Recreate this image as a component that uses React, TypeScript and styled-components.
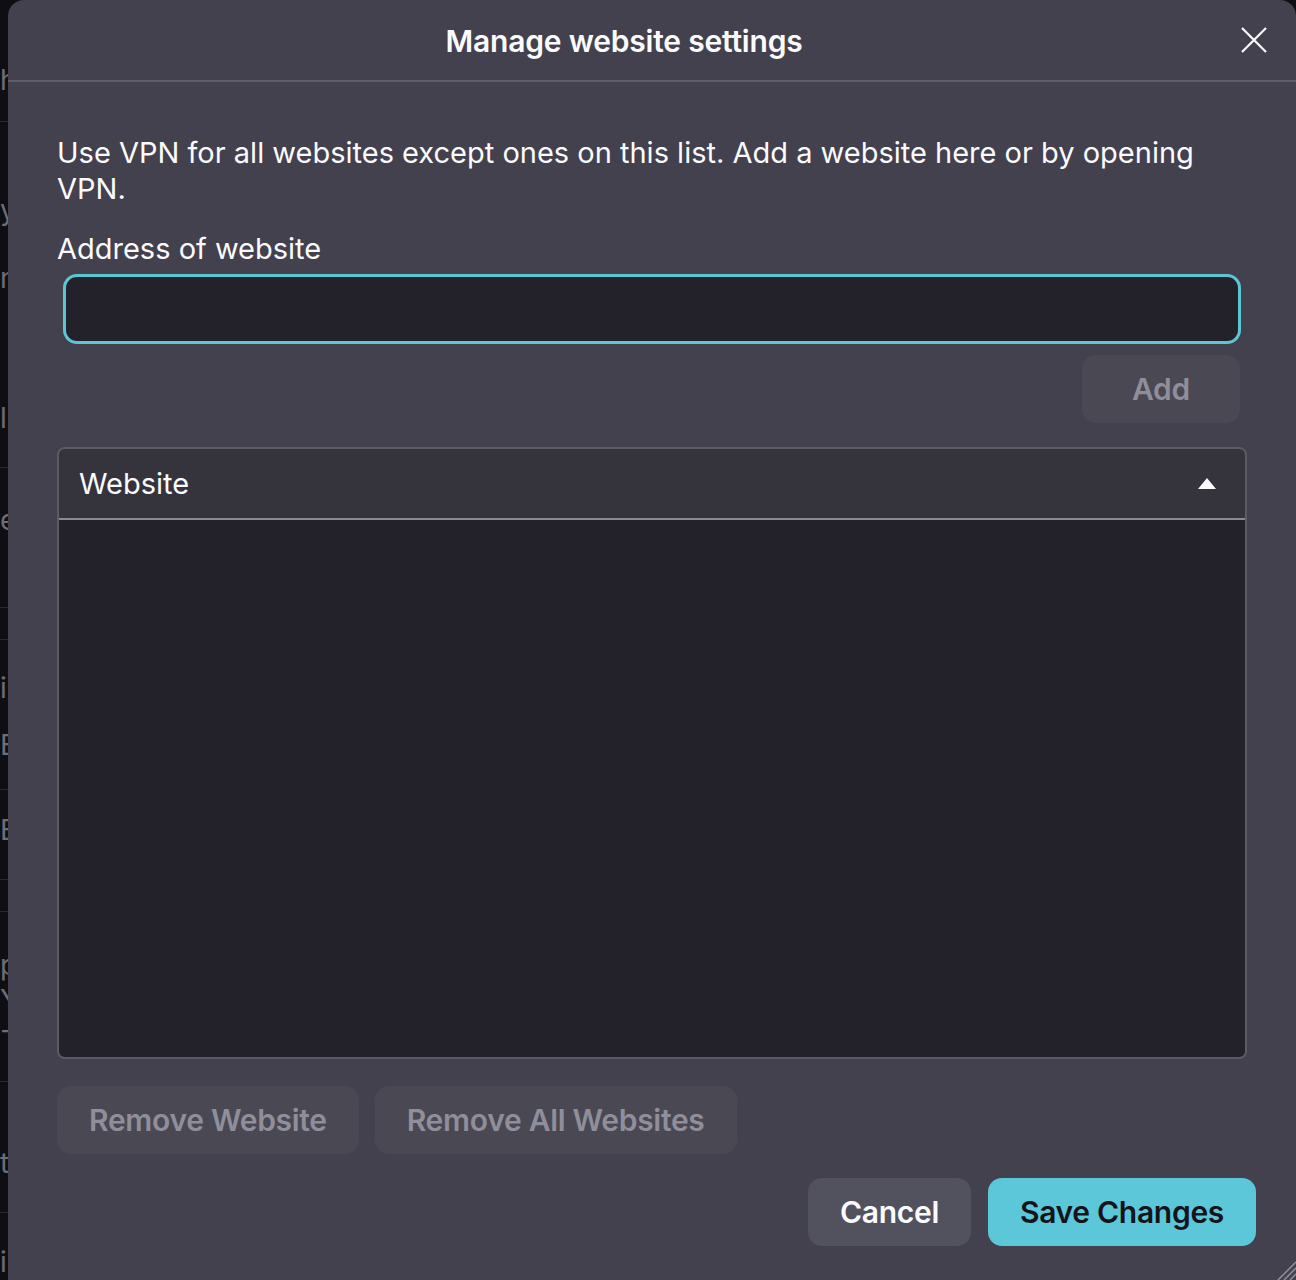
import React from 'react'
import styled, { createGlobalStyle } from 'styled-components'

const GlobalStyle = createGlobalStyle`
  html, body {
    margin: 0;
    padding: 0;
    background: #0f0f13;
  }
  body {
    font-family: Inter, "Noto Sans", "Liberation Sans", sans-serif;
    -webkit-font-smoothing: antialiased;
  }
`

const Page = styled.div`
  display: flex;
  width: 1296px;
  height: 1280px;
  overflow: hidden;
`

/* settings page peeking out behind the dialog */
const Backdrop = styled.div`
  width: 8px;
  flex-shrink: 0;
  overflow: hidden;
  display: flex;
  flex-direction: column;
  background: #0f0f13;
`

const BackdropRow = styled.div<{ $height: number; $divider?: boolean }>`
  height: ${({ $height }) => $height}px;
  flex-shrink: 0;
  box-sizing: border-box;
  border-bottom: ${({ $divider }) => ($divider ? '1px solid #2a2930' : 'none')};
  display: flex;
  flex-direction: column;
`

const BackdropGlyph = styled.div<{ $top: number }>`
  margin-top: ${({ $top }) => $top}px;
  font-size: 28px;
  line-height: 30px;
  height: 30px;
  color: #6e6d76;
  white-space: nowrap;
`

const Dialog = styled.div`
  position: relative;
  flex: 1;
  display: flex;
  flex-direction: column;
  background: #42414d;
  border-radius: 16px 16px 0 0;
  color: #fbfbfe;
`

const Header = styled.div`
  display: flex;
  align-items: center;
  height: 80px;
  padding-right: 28px;
  border-bottom: 2px solid #5e5d68;
`

const Title = styled.h1`
  flex: 1;
  margin: 0;
  padding-top: 2px;
  text-align: center;
  font-size: 30px;
  font-weight: 600;
  letter-spacing: -0.2px;
`

const CloseButton = styled.button`
  width: 28px;
  height: 28px;
  padding: 0;
  border: none;
  background: transparent;
  display: flex;
  align-items: center;
  justify-content: center;
`

const Body = styled.div`
  display: flex;
  flex-direction: column;
  padding: 53px 49px 0;
`

const Intro = styled.p`
  margin: 0;
  font-size: 29px;
  line-height: 36px;
`

const FieldLabel = styled.label`
  margin-top: 24px;
  font-size: 29px;
  line-height: 36px;
`

const AddressInput = styled.input`
  margin: 7px 6px 0;
  height: 70px;
  box-sizing: border-box;
  background: #23222b;
  border: 3px solid #5bc6d6;
  border-radius: 14px;
  color: #fbfbfe;
  font-size: 29px;
  padding: 0 18px;
  outline: none;
`

const Button = styled.button<{ $variant?: 'ghost' | 'neutral' | 'primary' }>`
  height: 68px;
  padding: 0 32px;
  border: none;
  border-radius: 14px;
  font-family: inherit;
  font-size: 30px;
  font-weight: 600;
  letter-spacing: -0.3px;
  white-space: nowrap;
  background: ${({ $variant }) =>
    $variant === 'primary' ? '#5cc7d8' : $variant === 'neutral' ? '#52515e' : '#494853'};
  color: ${({ $variant }) =>
    $variant === 'primary' ? '#15141a' : $variant === 'neutral' ? '#fbfbfe' : '#8f8e9a'};
`

const AddButton = styled(Button)`
  align-self: flex-end;
  width: 158px;
  margin: 11px 7px 0 0;
  padding: 0;
`

const Table = styled.div`
  margin-top: 24px;
  height: 612px;
  box-sizing: border-box;
  display: flex;
  flex-direction: column;
  border: 2px solid #5b5a65;
  border-radius: 8px;
  overflow: hidden;
`

const TableHead = styled.div`
  display: flex;
  align-items: center;
  justify-content: space-between;
  height: 69px;
  flex-shrink: 0;
  padding: 0 29px 0 20px;
  background: #35343d;
  border-bottom: 2px solid #8a8994;
  font-size: 29px;
`

const TableBody = styled.div`
  flex: 1;
  background: #23222b;
`

const ButtonRow = styled.div`
  display: flex;
  gap: 16px;
  margin-top: 27px;
`

const Footer = styled.div`
  display: flex;
  justify-content: flex-end;
  gap: 17px;
  margin: 24px -9px 0 0;
`

const ResizeGrip = styled.svg`
  position: absolute;
  right: 0;
  bottom: 0;
`

const backdropRows = [
  { height: 122, glyphs: [{ top: 65, text: 'h' }] },
  { height: 346, glyphs: [{ top: 73, text: 'y' }, { top: 38, text: 'n' }, { top: 110, text: 'l' }] },
  { height: 140, glyphs: [{ top: 37, text: 'e' }] },
  { height: 32, glyphs: [] },
  { height: 150, glyphs: [{ top: 33, text: 'i' }, { top: 27, text: 'E' }] },
  { height: 90, glyphs: [{ top: 25, text: 'B' }] },
  { height: 32, glyphs: [] },
  { height: 170, glyphs: [{ top: 38, text: 'p' }, { top: 5, text: 'Y' }, { top: 0, text: '-' }] },
  { height: 131, glyphs: [{ top: 66, text: 't' }] },
  { height: 67, glyphs: [{ top: 34, text: 'i' }], last: true },
]

export default function App() {
  return (
    <>
      <GlobalStyle />
      <Page>
        <Backdrop>
          {backdropRows.map((row, i) => (
            <BackdropRow key={i} $height={row.height} $divider={!row.last}>
              {row.glyphs.map((g, j) => (
                <BackdropGlyph key={j} $top={g.top}>
                  {g.text}
                </BackdropGlyph>
              ))}
            </BackdropRow>
          ))}
        </Backdrop>

        <Dialog>
          <Header>
            <Title>Manage website settings</Title>
            <CloseButton aria-label="Close">
              <svg width="26" height="26" viewBox="0 0 26 26">
                <path d="M1 1 L25 25 M25 1 L1 25" stroke="#fbfbfe" strokeWidth="2.2" />
              </svg>
            </CloseButton>
          </Header>

          <Body>
            <Intro>
              Use VPN for all websites except ones on this list. Add a website here or by opening
              VPN.
            </Intro>
            <FieldLabel htmlFor="site-address">Address of website</FieldLabel>
            <AddressInput id="site-address" type="text" />
            <AddButton>Add</AddButton>

            <Table>
              <TableHead>
                <span>Website</span>
                <svg width="18" height="11" viewBox="0 0 18 11">
                  <path d="M9 0 L18 11 L0 11 Z" fill="#fbfbfe" />
                </svg>
              </TableHead>
              <TableBody />
            </Table>

            <ButtonRow>
              <Button>Remove Website</Button>
              <Button>Remove All Websites</Button>
            </ButtonRow>

            <Footer>
              <Button $variant="neutral">Cancel</Button>
              <Button $variant="primary">Save Changes</Button>
            </Footer>
          </Body>

          <ResizeGrip width="22" height="22" viewBox="0 0 22 22">
            <path d="M22 4 L4 22 M22 10 L10 22 M22 16 L16 22" stroke="#8f8e9a" strokeWidth="1.5" />
          </ResizeGrip>
        </Dialog>
      </Page>
    </>
  )
}
